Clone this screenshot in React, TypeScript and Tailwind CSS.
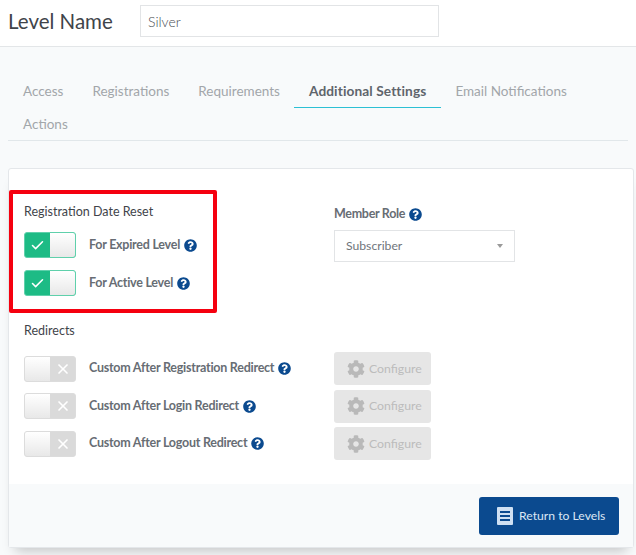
import { Check, X } from "lucide-react"
import { FaCog, FaQuestionCircle } from "react-icons/fa"

const font = "font-['Lato','Noto_Sans',sans-serif]"

function Help() {
  return <FaQuestionCircle className="ml-[4px] shrink-0 text-[13px] text-[#0b4a8f]" />
}

function Toggle({ on }: { on?: boolean }) {
  if (on) {
    return (
      <div className="flex h-[26px] w-[52px] shrink-0 overflow-hidden rounded-[3px] border border-[#5fd0ab] bg-[#1dbb85]">
        <div className="flex w-[25px] items-center justify-center">
          <Check size={15} strokeWidth={2.5} className="text-white" />
        </div>
        <div className="flex-1 bg-gradient-to-b from-[#ffffff] to-[#e8e8e8]" />
      </div>
    )
  }
  return (
    <div className="flex h-[26px] w-[52px] shrink-0 overflow-hidden rounded-[3px] border border-[#dcdcdc] bg-[#dadada]">
      <div className="w-[25px] bg-gradient-to-b from-[#ffffff] to-[#e8e8e8]" />
      <div className="flex flex-1 items-center justify-center">
        <X size={16} strokeWidth={2.5} className="text-white" />
      </div>
    </div>
  )
}

function ToggleRow({ on, label }: { on?: boolean; label: string }) {
  return (
    <div className="flex items-center">
      <Toggle on={on} />
      <span className="ml-[13px] text-[12.5px] font-bold tracking-[-0.25px] text-[#676d74]">{label}</span>
      <Help />
    </div>
  )
}

function RedirectRow({ label }: { label: string }) {
  return (
    <div className="flex h-[37.5px] items-center">
      <div className="w-[310px]">
        <ToggleRow label={label} />
      </div>
      <div className="flex h-[33px] w-[97px] items-center gap-[4px] rounded-[3px] bg-[#e6e6e6] pl-[13px] text-[12.3px] text-[#bcbcbc]">
        <FaCog className="text-[18px] text-[#b9b9b9]" />
        Configure
      </div>
    </div>
  )
}

export default function App() {
  const tabs = ["Access", "Registrations", "Requirements"]
  return (
    <div className={`h-[555px] w-[636px] overflow-hidden bg-[#f8fafb] ${font}`}>
      {/* header */}
      <div className="flex h-[47px] items-start border-b border-[#e3e6e8] bg-white pl-[8px] pt-[5px]">
        <h1 className="mt-[5px] w-[132px] text-[20.5px] leading-[22px] text-[#3f444a]">Level Name</h1>
        <div className="flex h-[32px] w-[299px] items-center border border-[#e2e4e6] bg-white pl-[7px] text-[14px] font-light text-[#484d53]">
          Silver
        </div>
      </div>

      {/* tabs */}
      <div className="mx-[8px] mt-[28px] flex flex-wrap border-b border-[#e1e7ea] pl-[0.5px] text-[13.5px]">
        {tabs.map((t) => (
          <div key={t} className="flex h-[33px] items-center px-[14.5px] text-[#a2a6aa]">
            {t}
          </div>
        ))}
        <div className="flex h-[33px] flex-col text-[13.7px] font-bold tracking-[0.1px] text-[#5f656c]">
          <div className="flex flex-1 items-center px-[14.5px]">Additional Settings</div>
          <div className="h-px bg-[#2cc0d4]" />
        </div>
        <div className="flex h-[33px] items-center px-[14.5px] text-[#a2a6aa]">Email Notifications</div>
        <div className="flex h-[32px] items-center px-[14.5px] text-[#a2a6aa]">Actions</div>
      </div>

      {/* card */}
      <div className="relative mx-[8px] mt-[27px] w-[626px] rounded-[3px] border border-[#e4e7ea] bg-white shadow-[0_10px_12px_-7px_rgba(0,0,0,0.22)]">
        <div className="px-[15px] pt-[34px]">
          <div className="flex">
            <div className="w-[310px]">
              <div className="text-[12.5px] leading-[18px] text-[#3f444a]">Registration Date Reset</div>
              <div className="mt-[11px] flex flex-col gap-[12px]">
                <ToggleRow on label="For Expired Level" />
                <ToggleRow on label="For Active Level" />
              </div>
            </div>
            <div>
              <div className="flex items-center pt-[2px] text-[12.5px] font-bold leading-[18px] tracking-[-0.3px] text-[#676d74]">
                Member Role
                <Help />
              </div>
              <div className="mt-[7px] flex h-[32px] w-[181px] items-center justify-between border border-[#e2e4e6] pl-[11px] pr-[11px] text-[12.2px] text-[#70757b]">
                Subscriber
                <span className="h-0 w-0 border-x-[3.5px] border-t-[4px] border-x-transparent border-t-[#9a9a9a]" />
              </div>
            </div>
          </div>

          <div className="mt-[26px] text-[12.5px] leading-[18px] text-[#3f444a]">Redirects</div>
          <div className="mt-[10px] pb-[21px]">
            <RedirectRow label="Custom After Registration Redirect" />
            <RedirectRow label="Custom After Login Redirect" />
            <RedirectRow label="Custom After Logout Redirect" />
          </div>
        </div>

        <div className="flex h-[63px] items-start justify-end bg-[#f8fafb] pr-[14px] pt-[13px]">
          <div className="flex h-[38px] w-[140px] items-center gap-[6px] rounded-[3px] bg-[#0b4a8f] pl-[18px] text-[12.2px] text-[#dbe7f5]">
            <svg width="16" height="18" viewBox="0 0 16 18">
              <rect width="16" height="18" rx="1" fill="#cfe0f3" />
              <rect x="3" y="4" width="10" height="2" fill="#0b4a8f" />
              <rect x="3" y="8" width="10" height="2" fill="#0b4a8f" />
              <rect x="3" y="12" width="10" height="2" fill="#0b4a8f" />
            </svg>
            <span className="mt-[2px]">Return to Levels</span>
          </div>
        </div>

        {/* red highlight drawn over the screenshot */}
        <div className="absolute left-[0px] top-[21px] h-[123px] w-[208px] rounded-[2px] border-[4px] border-[#f5000f]" />
      </div>
    </div>
  )
}
